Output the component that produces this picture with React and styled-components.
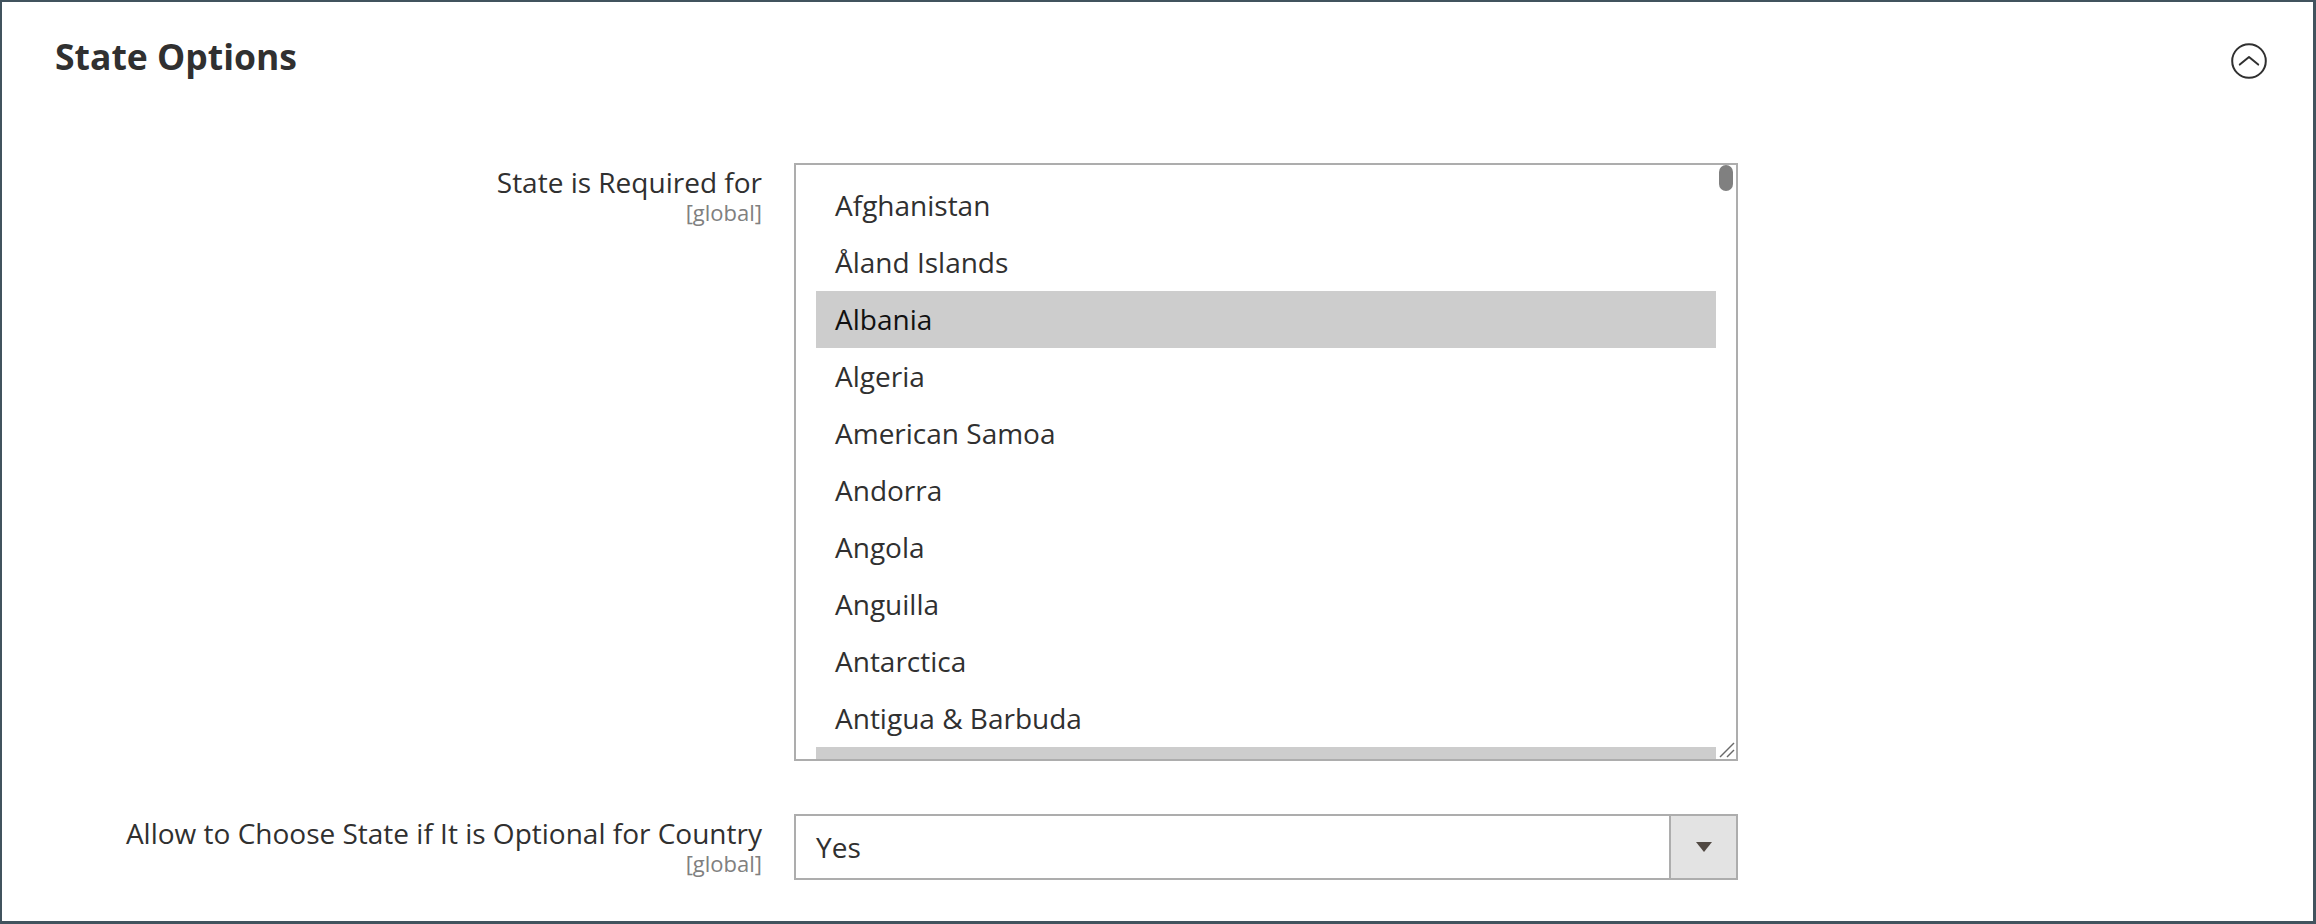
import React from 'react';
import styled, { createGlobalStyle } from 'styled-components';

const Global = createGlobalStyle`
  html, body { margin: 0; padding: 0; background: #fff; }
  body { font-family: "Open Sans", "Noto Sans", sans-serif; }
  #root { display: block; }
`;

const Panel = styled.section`
  box-sizing: border-box;
  width: 2316px;
  height: 924px;
  border: solid #41535e;
  border-width: 2px 3px 3px 2px;
  background: #fff;
  padding: 34px 46px 0 53px;
`;

const Header = styled.header`
  display: flex;
  justify-content: space-between;
  align-items: flex-start;
`;

const Title = styled.h2`
  margin: 0;
  font-size: 35.5px;
  line-height: 40px;
  font-weight: 700;
  color: #303030;
`;

const CollapseButton = styled.button`
  display: block;
  margin-top: 7px;
  width: 36px;
  height: 36px;
  padding: 0;
  border: 0;
  background: none;
  cursor: pointer;
`;

const Fields = styled.div`
  margin-top: 84px;
  display: flex;
  flex-direction: column;
  gap: 53px;
`;

const Row = styled.div`
  display: grid;
  grid-template-columns: 707px 944px;
  column-gap: 32px;
  align-items: start;
`;

const LabelBox = styled.div`
  text-align: right;
`;

const LabelText = styled.label`
  display: block;
  font-size: 28px;
  line-height: 39px;
  color: #303030;
`;

const Scope = styled.div`
  font-size: 22px;
  line-height: 20px;
  color: #808080;
`;

const Listbox = styled.div`
  position: relative;
  box-sizing: border-box;
  height: 598px;
  border: 2px solid #adadad;
  padding-left: 20px;
  display: flex;
  background: #fff;
`;

const OptionList = styled.ul`
  flex: 1;
  min-width: 0;
  margin: 0;
  padding: 12px 0 0;
  list-style: none;
  overflow: hidden;
`;

const Option = styled.li`
  height: 57px;
  line-height: 57px;
  padding-left: 19px;
  font-size: 28px;
  white-space: nowrap;
  color: ${(p) => (p.$selected ? '#111' : '#303030')};
  background: ${(p) => (p.$selected ? '#cdcdcd' : 'transparent')};
`;

const ScrollTrack = styled.div`
  flex: none;
  width: 20px;
`;

const ScrollThumb = styled.div`
  width: 14px;
  height: 26px;
  margin-left: 3px;
  border-radius: 7px;
  background: #808080;
`;

const ResizeGrip = styled.svg`
  position: absolute;
  right: 1px;
  bottom: 1px;
  width: 16px;
  height: 16px;
`;

const Select = styled.div`
  box-sizing: border-box;
  height: 66px;
  border: 2px solid #adadad;
  display: flex;
  align-items: stretch;
  background: #fff;
`;

const SelectValue = styled.div`
  flex: 1;
  padding-left: 20px;
  font-size: 28px;
  line-height: 62px;
  color: #303030;
`;

const SelectButton = styled.div`
  box-sizing: border-box;
  width: 67px;
  border-left: 2px solid #adadad;
  background: #e3e3e3;
  display: flex;
  align-items: center;
  justify-content: center;
`;

const countries = [
  'Afghanistan',
  'Åland Islands',
  'Albania',
  'Algeria',
  'American Samoa',
  'Andorra',
  'Angola',
  'Anguilla',
  'Antarctica',
  'Antigua & Barbuda',
  'Argentina',
];
const selected = new Set(['Albania', 'Argentina']);

export default function App() {
  return (
    <>
      <Global />
      <Panel>
        <Header>
          <Title>State Options</Title>
          <CollapseButton aria-label="Collapse">
            <svg width="36" height="36" viewBox="0 0 36 36" fill="none">
              <circle cx="18" cy="18" r="16.8" stroke="#303030" strokeWidth="2" />
              <polyline
                points="8.8,21.6 18,14 27.2,21.6"
                stroke="#303030"
                strokeWidth="2"
                strokeLinecap="round"
                strokeLinejoin="round"
              />
            </svg>
          </CollapseButton>
        </Header>
        <Fields>
          <Row>
            <LabelBox>
              <LabelText>State is Required for</LabelText>
              <Scope>[global]</Scope>
            </LabelBox>
            <Listbox>
              <OptionList>
                {countries.map((c) => (
                  <Option key={c} $selected={selected.has(c)}>
                    {c}
                  </Option>
                ))}
              </OptionList>
              <ScrollTrack>
                <ScrollThumb />
              </ScrollTrack>
              <ResizeGrip viewBox="0 0 16 16">
                <line x1="1" y1="15" x2="15" y2="1" stroke="#6a6a6a" strokeWidth="1.4" />
                <line x1="8" y1="15" x2="15" y2="8" stroke="#6a6a6a" strokeWidth="1.4" />
              </ResizeGrip>
            </Listbox>
          </Row>
          <Row>
            <LabelBox>
              <LabelText>Allow to Choose State if It is Optional for Country</LabelText>
              <Scope>[global]</Scope>
            </LabelBox>
            <Select>
              <SelectValue>Yes</SelectValue>
              <SelectButton>
                <svg width="16" height="10" viewBox="0 0 16 10">
                  <polygon points="0,0 16,0 8,10" fill="#514943" />
                </svg>
              </SelectButton>
            </Select>
          </Row>
        </Fields>
      </Panel>
    </>
  );
}
